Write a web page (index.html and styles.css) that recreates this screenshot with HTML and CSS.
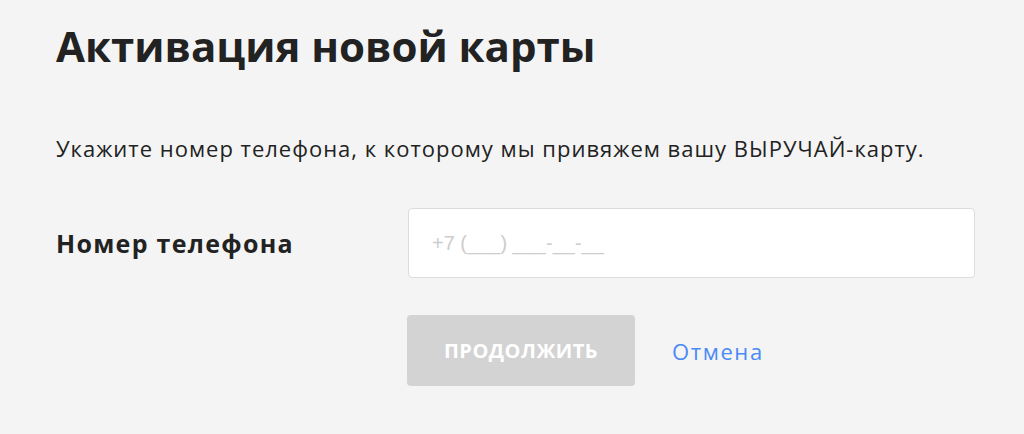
FILE: index.html
```html
<!DOCTYPE html>
<html lang="ru">
<head>
<meta charset="utf-8">
<title>Активация новой карты</title>
<link rel="stylesheet" href="styles.css">
</head>
<body>
<main class="page">
  <h1 class="title">Активация новой карты</h1>
  <p class="lead">Укажите номер телефона, к которому мы привяжем вашу ВЫРУЧАЙ-карту.</p>
  <div class="field">
    <label class="label" for="phone">Номер телефона</label>
    <input class="input" id="phone" type="tel" placeholder="+7 (___) ___-__-__">
  </div>
  <div class="actions">
    <button class="btn" type="button" disabled>Продолжить</button>
    <a class="cancel" href="#">Отмена</a>
  </div>
</main>
</body>
</html>
```

FILE: styles.css
```css
html, body {
  margin: 0;
  padding: 0;
  background: #f4f4f4;
}
body {
  font-family: "Open Sans", "Noto Sans", sans-serif;
  color: #222;
  width: 1024px;
  height: 434px;
  overflow: hidden;
}
.page {
  padding: 22px 0 0 56px;
}
.title {
  margin: 0;
  font-size: 42px;
  line-height: 48px;
  font-weight: 700;
  color: #222;
}
.lead {
  margin: 64px 0 0;
  font-size: 22px;
  line-height: 28px;
  letter-spacing: 1px;
}
.field {
  display: flex;
  align-items: center;
  margin-top: 46px;
}
.label {
  width: 352px;
  flex: none;
  font-size: 25px;
  line-height: 32px;
  font-weight: 700;
  letter-spacing: 1.3px;
  color: #222;
}
.input {
  box-sizing: border-box;
  width: 567px;
  height: 70px;
  border: 1px solid #dcdcdc;
  border-radius: 4px;
  background: #fff;
  padding: 0 23px;
  font-family: "Liberation Sans", Arial, sans-serif;
  font-size: 20px;
  color: #222;
  outline: none;
}
.input::placeholder {
  color: #cdcdcd;
}
.actions {
  display: flex;
  align-items: center;
  margin: 37px 0 0 351px;
  gap: 37px;
}
.btn {
  width: 228px;
  height: 71px;
  border: 0;
  border-radius: 4px;
  background: #d3d3d3;
  color: #fff;
  font-family: "Open Sans", sans-serif;
  font-size: 20px;
  font-weight: 700;
  letter-spacing: 0.5px;
  text-transform: uppercase;
  padding: 0;
}
.cancel {
  font-size: 22px;
  letter-spacing: 1.6px;
  color: #4a8af4;
  text-decoration: none;
}
```
